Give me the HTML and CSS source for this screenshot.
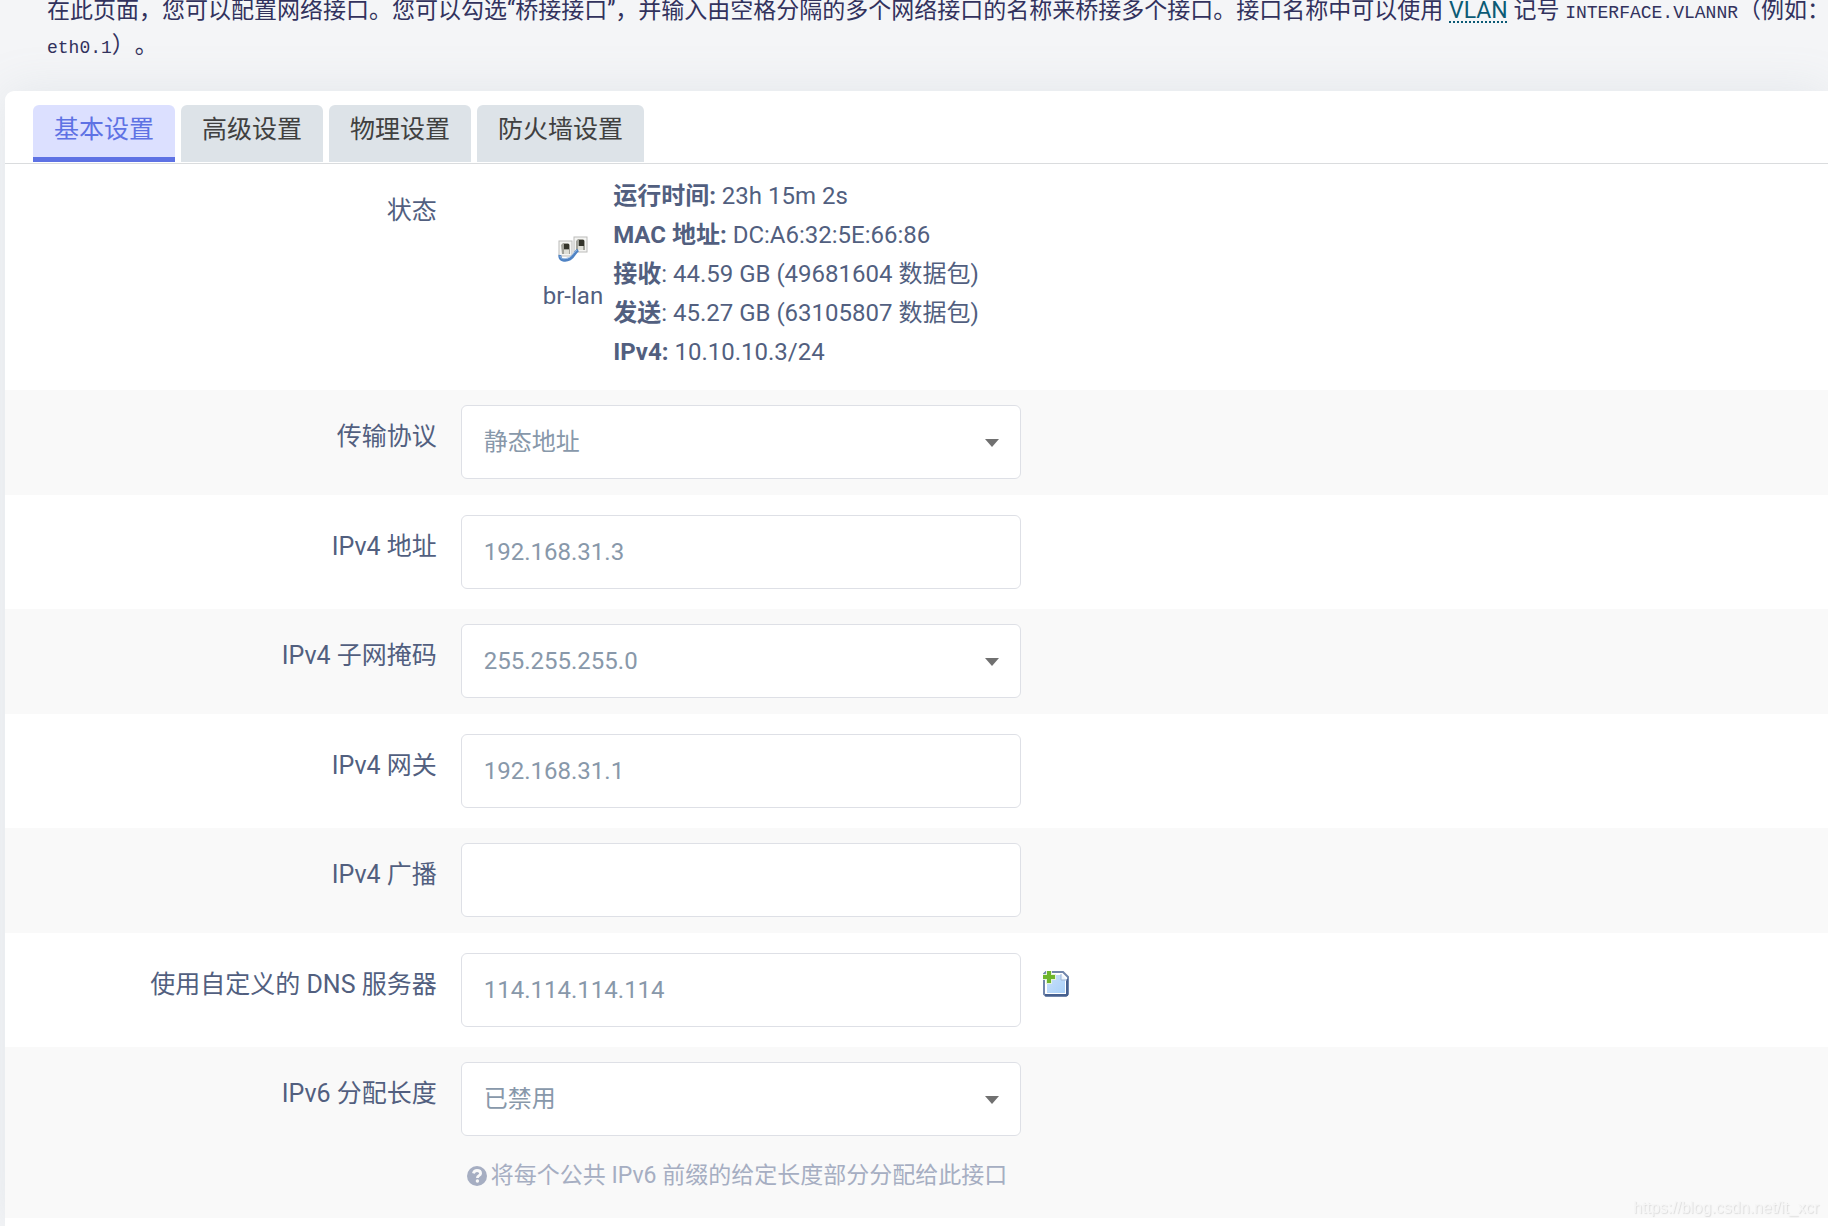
FILE: index.html
```html
<!DOCTYPE html>
<html lang="zh-CN">
<head>
<meta charset="utf-8">
<title>接口 - LAN</title>
<link rel="stylesheet" href="styles.css">
</head>
<body>
<p class="intro">在此页面，您可以配置网络接口。您可以勾选“桥接接口”，并输入由空格分隔的多个网络接口的名称来桥接多个接口。接口名称中可以使用 <abbr>VLAN</abbr> 记号 <samp>INTERFACE.VLANNR</samp>（例如：<samp>eth0.1</samp>）。</p>
<main class="card">
  <nav class="tabs">
    <a class="tab tab-active" href="#general">基本设置</a>
    <a class="tab" href="#advanced">高级设置</a>
    <a class="tab" href="#physical">物理设置</a>
    <a class="tab" href="#firewall">防火墙设置</a>
  </nav>
  <form class="form" id="general">
    <div class="row row-status">
      <div class="label">状态</div>
      <div class="status">
        <div class="device">
          <svg class="device-icon" viewBox="0 0 30 26" aria-hidden="true">
            <rect x="1" y="5" width="13" height="15" fill="#f4f4f2" stroke="#bcbcba"/>
            <rect x="16" y="1" width="13" height="15" fill="#f4f4f2" stroke="#bcbcba"/>
            <path d="M3 9l2-2h5l2 2v9H4z" fill="#a2a29a"/>
            <path d="M18 5l2-2h5l2 2v9h-9z" fill="#a2a29a"/>
            <path d="M6 8h5v5H6zM21 4h5v6h-5z" fill="#34342a"/>
            <path d="M6 14h5v4H6zM20 10h5v4h-5z" fill="#deded6"/>
            <path d="M2 19c-1 6 6 6 10 4 4-2 4-6 8-9" fill="none" stroke="#4f83c4" stroke-width="3"/>
            <path d="M2 20c1 4 6 3 10 1 3-2 4-5 7-7" fill="none" stroke="#94b8e2"/>
          </svg>
          <span>br-lan</span>
        </div>
        <div class="facts">
          <div><strong>运行时间:</strong> 23h 15m 2s</div>
          <div><strong>MAC 地址:</strong> DC:A6:32:5E:66:86</div>
          <div><strong>接收</strong>: 44.59 GB (49681604 数据包)</div>
          <div><strong>发送</strong>: 45.27 GB (63105807 数据包)</div>
          <div><strong>IPv4:</strong> 10.10.10.3/24</div>
        </div>
      </div>
    </div>
    <div class="row">
      <label class="label" for="proto">传输协议</label>
      <div class="field"><div class="picker"><select class="control" id="proto"><option>静态地址</option></select></div></div>
    </div>
    <div class="row">
      <label class="label" for="ipaddr">IPv4 地址</label>
      <div class="field"><input class="control" id="ipaddr" type="text" value="192.168.31.3"></div>
    </div>
    <div class="row">
      <label class="label" for="netmask">IPv4 子网掩码</label>
      <div class="field"><div class="picker"><select class="control" id="netmask"><option>255.255.255.0</option></select></div></div>
    </div>
    <div class="row">
      <label class="label" for="gateway">IPv4 网关</label>
      <div class="field"><input class="control" id="gateway" type="text" value="192.168.31.1"></div>
    </div>
    <div class="row">
      <label class="label" for="broadcast">IPv4 广播</label>
      <div class="field"><input class="control" id="broadcast" type="text"></div>
    </div>
    <div class="row">
      <label class="label" for="dns">使用自定义的 DNS 服务器</label>
      <div class="field">
        <input class="control" id="dns" type="text" value="114.114.114.114">
        <button class="add" type="button" aria-label="添加">
          <svg viewBox="0 0 26 26" aria-hidden="true">
            <defs><linearGradient id="sheet" x1="0" y1="0" x2="1" y2="1"><stop offset="0" stop-color="#c9e0fb"/><stop offset="1" stop-color="#a9d0f8"/></linearGradient></defs>
            <path d="M3 1h17l5 5v17l-2 2H3l-2-2V3z" fill="#fff" stroke="#7186ac" stroke-width="2"/>
            <path d="M2 24h22V8" fill="none" stroke="#46608f" stroke-width="2"/>
            <path d="M4 4h14l4 5v13H4z" fill="url(#sheet)"/>
            <path d="M18 3v6h6" fill="#e9f3fe" stroke="#9db4d6"/>
            <path d="M0 3h3V0h6v3h4v6H9v4H3V9H0z" fill="#e4f2dc"/>
            <path d="M4 0h4v4h4v4H8v4H4V8H0V4h4z" fill="#6fb52c"/>
          </svg>
        </button>
      </div>
    </div>
    <div class="row row-hint">
      <label class="label" for="ip6assign">IPv6 分配长度</label>
      <div class="field">
        <div class="picker"><select class="control" id="ip6assign"><option>已禁用</option></select></div>
        <div class="hint">
          <svg class="hint-icon" viewBox="0 0 20 20" aria-hidden="true">
            <circle cx="10" cy="10" r="10" fill="#a6aec2"/>
            <path d="M6.400 7.400C7 5.200 8.300 4.500 10 4.500c2 0 3.600 1.100 3.600 2.900 0 2.400-3.200 2.200-3.200 4.500" fill="none" stroke="#f9f9f9" stroke-width="2.800"/>
            <circle cx="10.400" cy="15" r="1.700" fill="#f9f9f9"/>
          </svg>
          <span>将每个公共 IPv6 前缀的给定长度部分分配给此接口</span>
        </div>
      </div>
    </div>
  </form>
</main>
<div class="watermark">https://blog.csdn.net/it_xcr</div>
</body>
</html>
```
FILE: styles.css
```css
* {
  box-sizing: border-box;
}

body {
  margin: 0;
  min-height: 100vh;
  display: flex;
  flex-direction: column;
  overflow-x: hidden;
  background: #f4f5f7;
  color: #525f7f;
  font-family: Roboto, "Noto Sans CJK SC", sans-serif;
  font-size: 24px;
  line-height: 36px;
}

.intro {
  margin: -7px -8px 28px 47px;
  color: #32325d;
  font-size: 23px;
  line-height: 35px;
  text-spacing-trim: space-all;
}

.intro samp {
  font-family: "Liberation Mono", monospace;
  font-size: 18px;
  line-height: 1;
}

.intro abbr {
  color: #0b5a75;
  text-decoration: underline dotted 2px;
  text-underline-offset: 3px;
}

.card {
  flex: 1;
  margin-left: 5px;
  background: #fff;
  border-top-left-radius: 9px;
  box-shadow: 0 0 48px rgba(136, 152, 170, 0.15);
}

.tabs {
  display: flex;
  gap: 6px;
  padding: 14px 28px 1px;
  border-bottom: 1px solid #dadcde;
}

.tab {
  padding: 0 21px 7px;
  border-radius: 6px 6px 0 0;
  background: #dde3e8;
  color: #404040;
  font-size: 25px;
  line-height: 50px;
  text-decoration: none;
}

.tab-active {
  padding-bottom: 2px;
  border-bottom: 5px solid #5e72e4;
  background: #dce0ff;
  color: #5e72e4;
}

.row {
  display: grid;
  grid-template-columns: 25% 1fr;
  padding: 20px 0;
}

.row:nth-child(even) {
  padding: 15px 0 16px;
  background: #f9f9f9;
}

.row-status {
  padding: 13px 0 18px;
}

.row:nth-child(even).row-hint {
  padding-bottom: 27px;
}

.label {
  padding: 14px 24px 0 0;
  font-size: 25px;
  text-align: right;
}

.row-status .label {
  padding-top: 16px;
}

.status {
  display: flex;
  align-items: center;
  gap: 10px;
  padding-left: 82px;
}

.device {
  display: flex;
  flex-direction: column;
  align-items: center;
  gap: 16px;
}

.device-icon {
  width: 30px;
  height: 26px;
}

.facts {
  line-height: 39px;
}

.field {
  display: flex;
  flex-wrap: wrap;
  align-items: center;
  column-gap: 22px;
}

.picker {
  position: relative;
  width: 560px;
}

.picker::after {
  content: "";
  position: absolute;
  top: 34px;
  right: 22px;
  border: 7px solid transparent;
  border-top: 8px solid #707070;
  border-bottom: 0;
  pointer-events: none;
}

.control {
  appearance: none;
  display: block;
  width: 560px;
  height: 74px;
  padding: 0 22px;
  border: 1px solid #dee0e6;
  border-radius: 6px;
  background: #fff;
  color: #8898aa;
  font: inherit;
}

.add {
  padding: 0 0 12px;
  border: 0;
  background: none;
}

.add svg {
  display: block;
  width: 26px;
  height: 26px;
}

.hint {
  display: flex;
  flex-basis: 100%;
  align-items: center;
  gap: 4px;
  margin: 25px 0 0 6px;
  color: #a6aec2;
  font-size: 23px;
  line-height: 30px;
}

.hint-icon {
  width: 20px;
  height: 20px;
}

.watermark {
  position: fixed;
  right: 9px;
  bottom: 6px;
  color: #f6f6f6;
  font: 16px/24px "Liberation Sans", sans-serif;
  text-shadow: 1px 1px 1px #dcdcdc;
}
```
